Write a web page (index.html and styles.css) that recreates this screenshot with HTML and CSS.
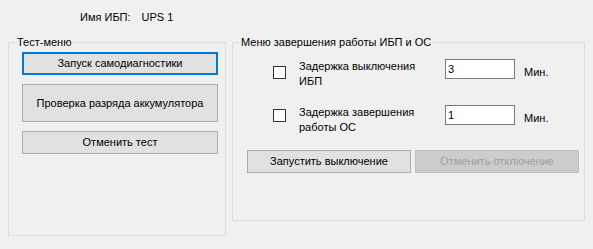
FILE: index.html
```html
<!DOCTYPE html>
<html lang="ru">
<head>
    <meta charset="UTF-8">
    <meta name="viewport" content="width=device-width, initial-scale=1.0">
    <title>Управление ИБП</title>
    <link rel="stylesheet" href="styles.css">
</head>
<body>
    <div class="header">
        <span class="header-label">Имя ИБП:</span>
        <span>UPS 1</span>
    </div>

    <div class="panels">
        <fieldset class="group group-test">
            <legend>Тест-меню</legend>
            <div class="test-body">
                <button class="btn btn-focus">Запуск самодиагностики</button>
                <button class="btn btn-tall">Проверка разряда аккумулятора</button>
                <button class="btn">Отменить тест</button>
            </div>
        </fieldset>

        <fieldset class="group group-shutdown">
            <legend>Меню завершения работы ИБП и ОС</legend>
            <div class="shutdown-body">
                <div class="delay-row">
                    <input type="checkbox" class="check check-ups">
                    <label class="delay-label">Задержка выключения<br>ИБП</label>
                    <input type="text" class="field" value="3">
                    <span class="unit">Мин.</span>
                </div>
                <div class="delay-row">
                    <input type="checkbox" class="check check-os">
                    <label class="delay-label">Задержка завершения<br>работы ОС</label>
                    <input type="text" class="field" value="1">
                    <span class="unit">Мин.</span>
                </div>
                <div class="actions">
                    <button class="btn btn-wide">Запустить выключение</button>
                    <button class="btn btn-wide" disabled>Отменить отключение</button>
                </div>
            </div>
        </fieldset>
    </div>
</body>
</html>
```

FILE: styles.css
```css
body {
    margin: 0;
    background: #f0f0f0;
    color: #000;
    font-family: 'Liberation Sans', Arial, sans-serif;
    font-size: 11px;
    line-height: 13px;
}
.header {
    display: flex;
    gap: 11px;
    padding: 11px 0 0 80px;
}
.panels {
    display: flex;
    align-items: flex-start;
    gap: 6px;
    margin-top: 12px;
    padding-left: 8px;
}
.group {
    box-sizing: border-box;
    margin: 0;
    padding: 0;
    min-width: 0;
    border: 1px solid #dcdcdc;
}
.group legend {
    margin-left: 6px;
    padding: 0 2px;
    line-height: 13px;
}
.group-test {
    width: 218px;
    height: 200px;
}
.group-shutdown {
    width: 353px;
    height: 185px;
}
.test-body {
    display: flex;
    flex-direction: column;
    gap: 9px;
    padding: 3px 7px 0 13px;
}
.btn {
    box-sizing: border-box;
    height: 23px;
    margin: 0;
    padding: 0;
    background: #e1e1e1;
    border: 1px solid #adadad;
    color: #000;
    font: inherit;
    cursor: pointer;
}
.btn-focus {
    border: 2px solid #0078d7;
}
.btn-tall {
    height: 38px;
}
.btn:disabled {
    background: #cccccc;
    border-color: #bfbfbf;
    color: #a0a0a0;
    cursor: default;
}
.shutdown-body {
    padding-top: 10px;
}
.delay-row {
    display: flex;
    align-items: flex-start;
    padding-left: 40px;
    margin-bottom: 16px;
}
.check {
    appearance: none;
    box-sizing: border-box;
    width: 13px;
    height: 13px;
    margin: 0 13px 0 0;
    background: #fff;
    border: 1px solid #333;
}
.check-ups {
    margin-top: 7px;
}
.check-os {
    margin-top: 4px;
}
.delay-label {
    width: 146px;
    line-height: 15px;
}
.field {
    box-sizing: border-box;
    width: 70px;
    height: 20px;
    margin: 0 9px 0 0;
    padding: 0 2px;
    background: #fff;
    border: 1px solid #7a7a7a;
    font: inherit;
    color: #000;
    outline: none;
}
.unit {
    margin-top: 7px;
}
.actions {
    display: flex;
    gap: 4px;
    padding-left: 14px;
    margin-top: -1px;
}
.btn-wide {
    width: 164px;
}
```
